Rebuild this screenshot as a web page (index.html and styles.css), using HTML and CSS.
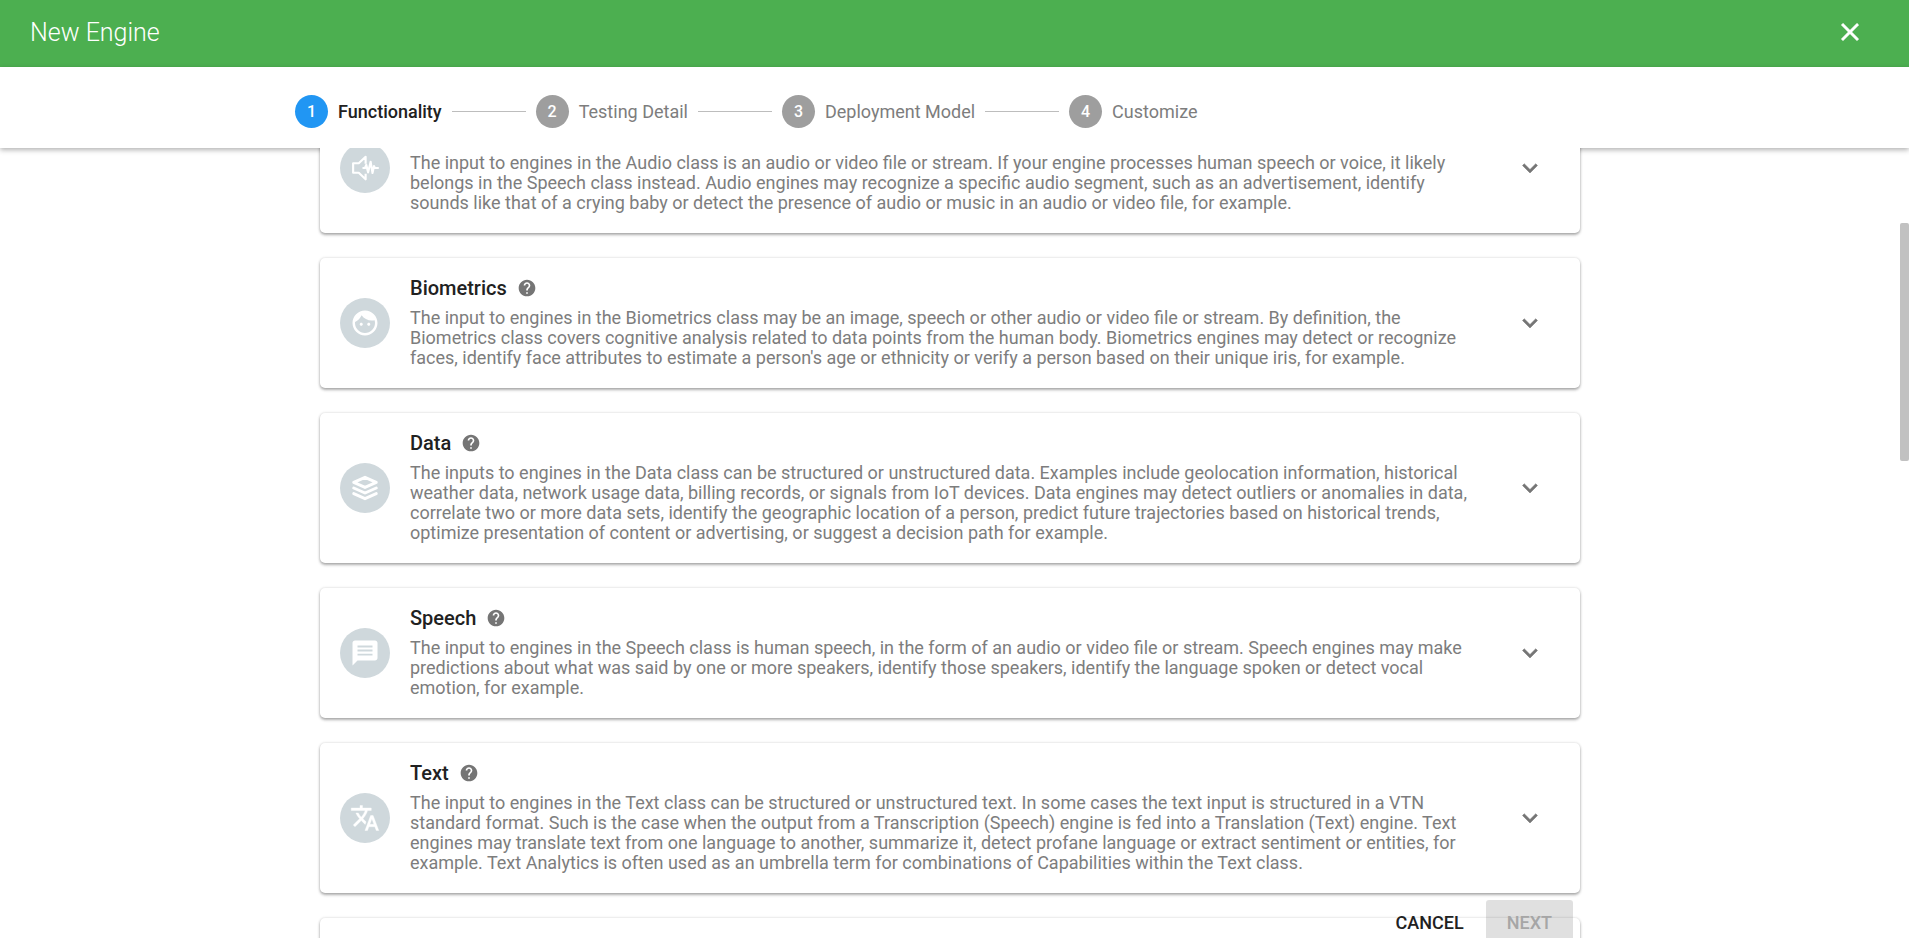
FILE: index.html
```html
<!DOCTYPE html>
<html lang="en">
<head>
<meta charset="utf-8">
<title>New Engine</title>
<link rel="stylesheet" href="styles.css">
</head>
<body>
<svg class="sprite" aria-hidden="true">
  <symbol id="help" viewBox="0 0 24 24"><path d="M12 2C6.480 2 2 6.480 2 12s4.480 10 10 10 10-4.480 10-10S17.520 2 12 2zm1 17h-2v-2h2v2zm2.070-7.750l-.9.920C13.450 12.900 13 13.500 13 15h-2v-.5c0-1.100.45-2.100 1.170-2.830l1.240-1.260c.37-.36.59-.86.59-1.410 0-1.100-.9-2-2-2s-2 .9-2 2H8c0-2.210 1.790-4 4-4s4 1.790 4 4c0 .88-.36 1.680-.93 2.250z"/></symbol>
  <symbol id="chevron" viewBox="0 0 24 24"><path d="M7.410 8.590L12 13.170l4.590-4.580L18 10l-6 6-6-6z"/></symbol>
  <symbol id="audio" viewBox="0 0 24 24"><path d="M12.500 8.500V3L7 8.200H2.500v7.600H7L12.500 21v-4.500M10 12h2l1-2.500 1.500 6L16.500 7l1.500 9 1.200-5.500L20 12h3" fill="none" stroke="currentColor" stroke-width="1.700" stroke-linejoin="round"/></symbol>
  <symbol id="face" viewBox="0 0 24 24"><path d="M9 11.750c-.69 0-1.250.56-1.250 1.250s.56 1.250 1.250 1.250 1.250-.56 1.250-1.250-.56-1.250-1.250-1.250zm6 0c-.69 0-1.250.56-1.250 1.250s.56 1.250 1.250 1.250 1.250-.56 1.250-1.250-.56-1.250-1.250-1.250zM12 2C6.480 2 2 6.480 2 12s4.480 10 10 10 10-4.480 10-10S17.520 2 12 2zm0 18c-4.410 0-8-3.590-8-8 0-.29.02-.58.05-.86 2.360-1.050 4.230-2.980 5.210-5.370C11.070 8.330 14.050 10 17.420 10c.78 0 1.530-.09 2.250-.26.21.71.33 1.470.33 2.260 0 4.410-3.590 8-8 8z"/></symbol>
  <symbol id="layers" viewBox="0 0 24 24"><path d="M12 3.500L21 7.500 12 11.500 3 7.500zM3 12l9 4 9-4M3 16.500l9 4 9-4" fill="none" stroke="currentColor" stroke-width="2.400" stroke-linejoin="round" stroke-linecap="round"/></symbol>
  <symbol id="chat" viewBox="0 0 24 24"><path d="M20 2H4c-1.100 0-1.990.9-1.990 2L2 22l4-4h14c1.100 0 2-.9 2-2V4c0-1.100-.9-2-2-2zM6 6h12v1.500H6zm12 8H6v-1.500h12zm0-3.250H6v-1.500h12z" fill-rule="evenodd"/></symbol>
  <symbol id="translate" viewBox="0 0 24 24"><path d="M12.870 15.070l-2.540-2.510.03-.03c1.740-1.940 2.980-4.170 3.710-6.530H17V4h-7V2H8v2H1v1.990h11.170C11.500 7.920 10.440 9.750 9 11.350 8.070 10.320 7.300 9.190 6.690 8h-2c.73 1.630 1.730 3.170 2.980 4.560l-5.090 5.020L4 19l5-5 3.110 3.110.76-2.040zM18.500 10h-2L12 22h2l1.120-3h4.750L21 22h2l-4.500-12zm-2.620 7l1.620-4.330L19.120 17h-3.240z" stroke="currentColor" stroke-width=".3"/></symbol>
</svg>
<div class="dialog">
  <header class="titlebar">
    <h1 class="title">New Engine</h1>
    <button class="icon-button" aria-label="Close"><svg viewBox="0 0 24 24"><path d="M19 6.410L17.590 5 12 10.590 6.410 5 5 6.410 10.590 12 5 17.590 6.410 19 12 13.410 17.590 19 19 17.590 13.410 12z"/></svg></button>
  </header>
  <nav class="stepbar" aria-label="Steps">
    <ol class="steps">
      <li class="step active"><span class="number">1</span><span>Functionality</span></li>
      <li class="step"><span class="number">2</span><span>Testing Detail</span></li>
      <li class="step"><span class="number">3</span><span>Deployment Model</span></li>
      <li class="step"><span class="number">4</span><span>Customize</span></li>
    </ol>
  </nav>
  <main class="content">
    <div class="cards">
      <section class="card">
        <span class="badge"><svg><use href="#audio"/></svg></span>
        <div class="info">
          <div class="name"></div>
          <p class="text">The input to engines in the Audio class is an audio or video file or stream. If your engine processes human speech or voice, it likely belongs in the Speech class instead. Audio engines may recognize a specific audio segment, such as an advertisement, identify sounds like that of a crying baby or detect the presence of audio or music in an audio or video file, for example.</p>
        </div>
        <button class="icon-button" aria-label="Expand Audio"><svg><use href="#chevron"/></svg></button>
      </section>
      <section class="card">
        <span class="badge"><svg><use href="#face"/></svg></span>
        <div class="info">
          <h2 class="name">Biometrics <svg class="help"><use href="#help"/></svg></h2>
          <p class="text">The input to engines in the Biometrics class may be an image, speech or other audio or video file or stream. By definition, the Biometrics class covers cognitive analysis related to data points from the human body. Biometrics engines may detect or recognize faces, identify face attributes to estimate a person's age or ethnicity or verify a person based on their unique iris, for example.</p>
        </div>
        <button class="icon-button" aria-label="Expand Biometrics"><svg><use href="#chevron"/></svg></button>
      </section>
      <section class="card">
        <span class="badge"><svg><use href="#layers"/></svg></span>
        <div class="info">
          <h2 class="name">Data <svg class="help"><use href="#help"/></svg></h2>
          <p class="text">The inputs to engines in the Data class can be structured or unstructured data. Examples include geolocation information, historical weather data, network usage data, billing records, or signals from IoT devices. Data engines may detect outliers or anomalies in data, correlate two or more data sets, identify the geographic location of a person, predict future trajectories based on historical trends, optimize presentation of content or advertising, or suggest a decision path for example.</p>
        </div>
        <button class="icon-button" aria-label="Expand Data"><svg><use href="#chevron"/></svg></button>
      </section>
      <section class="card">
        <span class="badge"><svg><use href="#chat"/></svg></span>
        <div class="info">
          <h2 class="name">Speech <svg class="help"><use href="#help"/></svg></h2>
          <p class="text">The input to engines in the Speech class is human speech, in the form of an audio or video file or stream. Speech engines may make predictions about what was said by one or more speakers, identify those speakers, identify the language spoken or detect vocal emotion, for example.</p>
        </div>
        <button class="icon-button" aria-label="Expand Speech"><svg><use href="#chevron"/></svg></button>
      </section>
      <section class="card">
        <span class="badge"><svg><use href="#translate"/></svg></span>
        <div class="info">
          <h2 class="name">Text <svg class="help"><use href="#help"/></svg></h2>
          <p class="text">The input to engines in the Text class can be structured or unstructured text. In some cases the text input is structured in a VTN standard format. Such is the case when the output from a Transcription (Speech) engine is fed into a Translation (Text) engine. Text engines may translate text from one language to another, summarize it, detect profane language or extract sentiment or entities, for example. Text Analytics is often used as an umbrella term for combinations of Capabilities within the Text class.</p>
        </div>
        <button class="icon-button" aria-label="Expand Text"><svg><use href="#chevron"/></svg></button>
      </section>
      <section class="card card-next"></section>
    </div>
    <span class="thumb"></span>
    <footer class="actions">
      <button class="button">CANCEL</button>
      <button class="button next" disabled>NEXT</button>
    </footer>
  </main>
</div>
</body>
</html>
```

FILE: styles.css
```css
* { box-sizing: border-box; }
body { margin: 0; font-family: Roboto, sans-serif; font-size: 18px; color: #212121; background: #fff; }
.sprite { display: none; }
.dialog { display: flex; flex-direction: column; height: 100vh; overflow: hidden; }
.titlebar { flex: none; display: flex; align-items: center; justify-content: space-between; height: 67px; padding: 0 34px 3px 30px; background: #4caf50; color: #fff; }
.title { margin: 0; padding-top: 2px; font-size: 25px; font-weight: 300; line-height: 30px; }
.icon-button { flex: none; display: flex; align-items: center; justify-content: center; width: 50px; height: 50px; padding: 0; border: 0; background: none; color: inherit; }
.icon-button svg, .badge svg { width: 30px; height: 30px; fill: currentColor; }
.icon-button svg { stroke: currentColor; stroke-width: .4px; }

.stepbar { flex: none; padding: 28px 9px 20px 0; background: #fff; box-shadow: 0 2px 5px rgba(0, 0, 0, .3); }
.steps { display: flex; gap: 10px; max-width: 1310px; margin: 0 auto; padding: 0; list-style: none; }
.step { display: flex; align-items: center; gap: 10px; line-height: 33px; color: #7d7d7d; }
.step + .step::before { content: ""; width: 74px; height: 1px; background: #bdbdbd; }
.step.active { color: #212121; font-weight: 500; }
.number { width: 33px; height: 33px; border-radius: 50%; background: #9e9e9e; color: #fff; font-size: 16px; font-weight: 500; text-align: center; }
.active .number { background: #2196f3; }

.content { position: relative; flex: 1; min-height: 0; overflow: hidden; padding-right: 9px; }
.cards { display: flex; flex-direction: column; gap: 25px; max-width: 1310px; margin: -45px auto 0; padding: 0 25px; }
.card { display: flex; align-items: center; gap: 20px; padding: 20px 25px 20px 20px; border-radius: 5px; background: #fff; box-shadow: 0 2px 3px rgba(0, 0, 0, .3), 0 0 3px rgba(0, 0, 0, .16); }
.card-next { min-height: 130px; }
.badge { flex: none; display: flex; align-items: center; justify-content: center; width: 50px; height: 50px; border-radius: 50%; background: #cfd8dc; color: #fff; }
.info { flex: 1; padding-right: 10px; }
.name { display: flex; align-items: center; gap: 10px; min-height: 20px; margin: 0 0 10px; font-size: 20px; font-weight: 500; line-height: 20px; }
.help { width: 20px; height: 20px; fill: #757575; }
.text { margin: 0; line-height: 20px; color: #7d7d7d; }
.card .icon-button { color: #757575; }

.thumb { position: absolute; top: 75px; right: 0; width: 9px; height: 238px; border-radius: 2px; background: #c1c1c1; }
.actions { position: absolute; bottom: -7px; left: 0; right: 9px; display: flex; justify-content: flex-end; gap: 1px; max-width: 1246px; margin: 0 auto; }
.button { height: 45px; padding: 0 21px; border: 0; border-radius: 3px; background: none; color: #212121; font: 500 18px Roboto, sans-serif; }
.next { background: rgba(0, 0, 0, .12); color: #a6a6a6; }
```
